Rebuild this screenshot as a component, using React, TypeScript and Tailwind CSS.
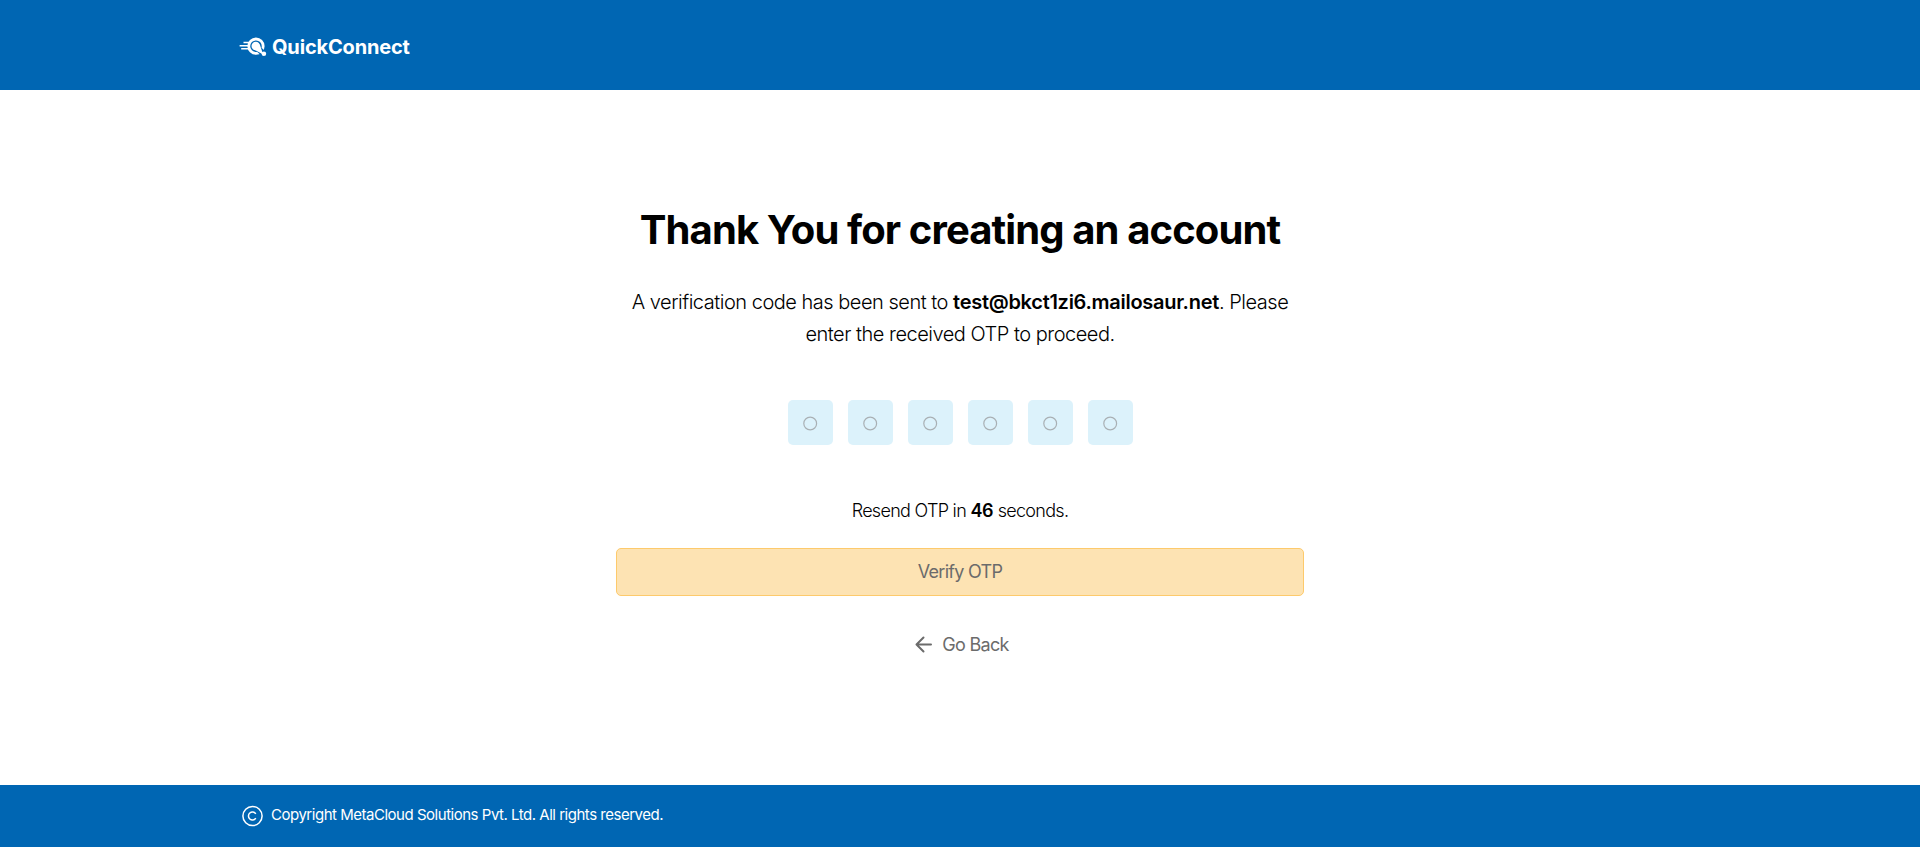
const OTP_LENGTH = 6;

function Logo() {
  return (
    <div className="flex items-center gap-[5px] text-white">
      <svg width="28" height="20" viewBox="0 0 28 20" fill="none" className="shrink-0">
        <path d="M4.5 5.5H10M0.6 8.7H9M2.2 11.7H10" stroke="currentColor" strokeWidth="1.5" />
        <circle cx="17" cy="9.2" r="7.2" stroke="currentColor" strokeWidth="2.8" />
        <path d="M16 9L25 17" stroke="#0066b3" strokeWidth="6" />
        <circle cx="16.8" cy="9" r="4.3" fill="currentColor" />
        <path d="M14 12L24.2 17.4L20.8 7.4Z" fill="currentColor" />
        <circle cx="24.9" cy="16.7" r="2.3" fill="currentColor" />
      </svg>
      <span className="text-[20px] leading-6 font-bold tracking-[-0.17px]">QuickConnect</span>
    </div>
  );
}

export default function App() {
  return (
    <div className="flex h-[847px] flex-col bg-white font-['Inter',sans-serif] text-black">
      <header className="h-[90px] shrink-0 bg-[#0066b3] pt-[35px] pl-[239px]">
        <Logo />
      </header>

      <main className="flex grow flex-col items-center">
        <h1 className="mt-[116px] text-[40px] leading-[48px] font-bold tracking-[-0.89px]">
          Thank You for creating an account
        </h1>
        <p className="mt-[32px] w-[688px] text-center text-[20px] leading-8 font-light tracking-[-0.49px]">
          A verification code has been sent to{" "}
          <span className="font-semibold tracking-[-0.28px]">test@bkct1zi6.mailosaur.net</span>.
          Please enter the received OTP to proceed.
        </p>
        <div className="mt-[50px] flex gap-[15px]">
          {Array.from({ length: OTP_LENGTH }, (_, i) => (
            <div
              key={i}
              className="flex size-[45px] items-center justify-center rounded-[5px] bg-[#dcf2fb]"
            >
              <svg width="15" height="17" viewBox="0 0 15 17" fill="none">
                <circle cx="7.2" cy="9.5" r="6.4" stroke="#a9b0b4" strokeWidth="1.2" />
              </svg>
            </div>
          ))}
        </div>
        <p className="mt-[52px] text-[18px] leading-7 font-light tracking-[-0.7px]">
          Resend OTP in <span className="font-semibold tracking-[-0.3px]">46</span> seconds.
        </p>
        <button className="mt-[23px] h-[48px] w-[688px] rounded-[5px] border border-[#fdca6c] bg-[#fde3b3] pb-px text-[18px] tracking-[-0.7px] text-[#6b6b6b]">
          Verify OTP
        </button>
        <button className="mt-[35px] flex items-center gap-[10px] pl-[4px] text-[18px] leading-7 tracking-[-0.7px] text-[#6b6b6b]">
          <svg width="17" height="18" viewBox="0 0 17 18" fill="none">
            <path
              d="M16 8.5H1.5M8.5 1.5L1.5 8.5L8.5 15.5"
              stroke="currentColor"
              strokeWidth="2"
              strokeLinecap="round"
              strokeLinejoin="round"
            />
          </svg>
          Go Back
        </button>
      </main>

      <footer className="flex h-[62px] shrink-0 items-center gap-[8px] bg-[#0066b3] pb-px pl-[241px] text-white">
        <svg width="22" height="22" viewBox="0 0 22 22" fill="none">
          <circle cx="11.5" cy="11" r="9.6" stroke="currentColor" strokeWidth="1.5" />
          <path d="M14.8 13.2A4 4 0 1 1 14.8 8.8" stroke="currentColor" strokeWidth="1.5" />
        </svg>
        <span className="pb-[2px] text-[15px] leading-6 tracking-[-0.48px]">
          Copyright MetaCloud Solutions Pvt. Ltd. All rights reserved.
        </span>
      </footer>
    </div>
  );
}
